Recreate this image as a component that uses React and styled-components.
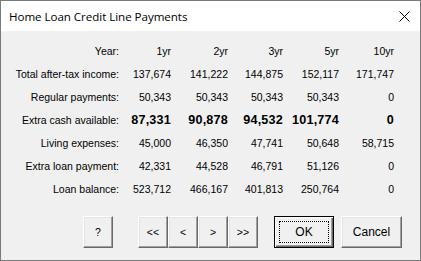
import React from 'react';
import styled, { createGlobalStyle } from 'styled-components';

const GlobalStyle = createGlobalStyle`
  html, body {
    margin: 0;
    padding: 0;
    background: #f0f0f0;
  }
`;

const Window = styled.div`
  box-sizing: border-box;
  width: 421px;
  height: 261px;
  border: 1px solid #7a7a7a;
  display: flex;
  flex-direction: column;
  background: #f0f0f0;
  font-family: 'Liberation Sans', Arial, sans-serif;
  color: #000;
`;

const TitleBar = styled.div`
  height: 30px;
  background: #fff;
  display: flex;
  align-items: center;
  justify-content: space-between;
  padding: 0 10px 0 8px;
  flex-shrink: 0;
`;

const Title = styled.span`
  font-family: 'Open Sans', 'Noto Sans', sans-serif;
  font-size: 11.6px;
  letter-spacing: -0.05px;
  padding-top: 1px;
`;

const CloseIcon = styled.svg`
  width: 11px;
  height: 11px;
`;

const Body = styled.div`
  flex: 1;
  display: flex;
  flex-direction: column;
  padding-top: 8px;
`;

const Table = styled.div`
  display: grid;
  grid-template-columns: 118px 52px 57px 55px 56px 55px;
  grid-auto-rows: 23px;
  font-size: 10.5px;
`;

const Cell = styled.div`
  display: flex;
  align-items: center;
  justify-content: flex-end;
  white-space: nowrap;
  font-weight: ${p => (p.$bold ? 'bold' : 'normal')};
  font-size: ${p => (p.$bold ? '12.6px' : '10.5px')};
  letter-spacing: ${p => (p.$bold ? '0.2px' : '0')};
`;

const ButtonRow = styled.div`
  display: flex;
  margin-top: 16px;
  padding-left: 82px;
`;

const Button = styled.button`
  box-sizing: border-box;
  width: ${p => p.$w}px;
  height: 32px;
  margin-right: ${p => p.$gap || 0}px;
  padding: 0;
  background: #f0f0f0;
  border: 1px solid;
  border-color: #fff #696969 #696969 #fff;
  box-shadow: inset -1px -1px #a0a0a0, inset 1px 1px #e3e3e3;
  font-family: 'Liberation Sans', Arial, sans-serif;
  font-size: ${p => p.$fs || 10.5}px;
  color: #000;
  display: flex;
  align-items: center;
  justify-content: center;
`;

const DefaultButton = styled(Button)`
  border: 1px solid #000;
  box-shadow: inset 1px 1px #fff, inset -1px -1px #696969, inset -2px -2px #a0a0a0;
  padding: 4px;
`;

const Focus = styled.span`
  box-sizing: border-box;
  width: 100%;
  height: 100%;
  border: 1px dotted #000;
  display: flex;
  align-items: center;
  justify-content: center;
  font-size: 12px;
`;

const years = ['1yr', '2yr', '3yr', '5yr', '10yr'];

const rows = [
  ['Total after-tax income:', ['137,674', '141,222', '144,875', '152,117', '171,747']],
  ['Regular payments:', ['50,343', '50,343', '50,343', '50,343', '0']],
  ['Extra cash available:', ['87,331', '90,878', '94,532', '101,774', '0'], true],
  ['Living expenses:', ['45,000', '46,350', '47,741', '50,648', '58,715']],
  ['Extra loan payment:', ['42,331', '44,528', '46,791', '51,126', '0']],
  ['Loan balance:', ['523,712', '466,167', '401,813', '250,764', '0']]
];

export default function App() {
  return (
    <>
      <GlobalStyle />
      <Window>
        <TitleBar>
          <Title>Home Loan Credit Line Payments</Title>
          <CloseIcon viewBox="0 0 11 11">
            <path d="M0.5 0.5 L10.5 10.5 M10.5 0.5 L0.5 10.5" stroke="#000" strokeWidth="1" fill="none" />
          </CloseIcon>
        </TitleBar>
        <Body>
          <Table>
            <Cell>Year:</Cell>
            {years.map(y => (
              <Cell key={y}>{y}</Cell>
            ))}
            {rows.map(([label, values, bold]) => (
              <React.Fragment key={label}>
                <Cell>{label}</Cell>
                {values.map((v, i) => (
                  <Cell key={i} $bold={bold}>
                    {v}
                  </Cell>
                ))}
              </React.Fragment>
            ))}
          </Table>
          <ButtonRow>
            <Button $w={30} $gap={25}>?</Button>
            <Button $w={30}>&lt;&lt;</Button>
            <Button $w={30}>&lt;</Button>
            <Button $w={30}>&gt;</Button>
            <Button $w={30} $gap={16}>&gt;&gt;</Button>
            <DefaultButton $w={60} $gap={7}>
              <Focus>OK</Focus>
            </DefaultButton>
            <Button $w={61} $fs={12}>Cancel</Button>
          </ButtonRow>
        </Body>
      </Window>
    </>
  );
}
